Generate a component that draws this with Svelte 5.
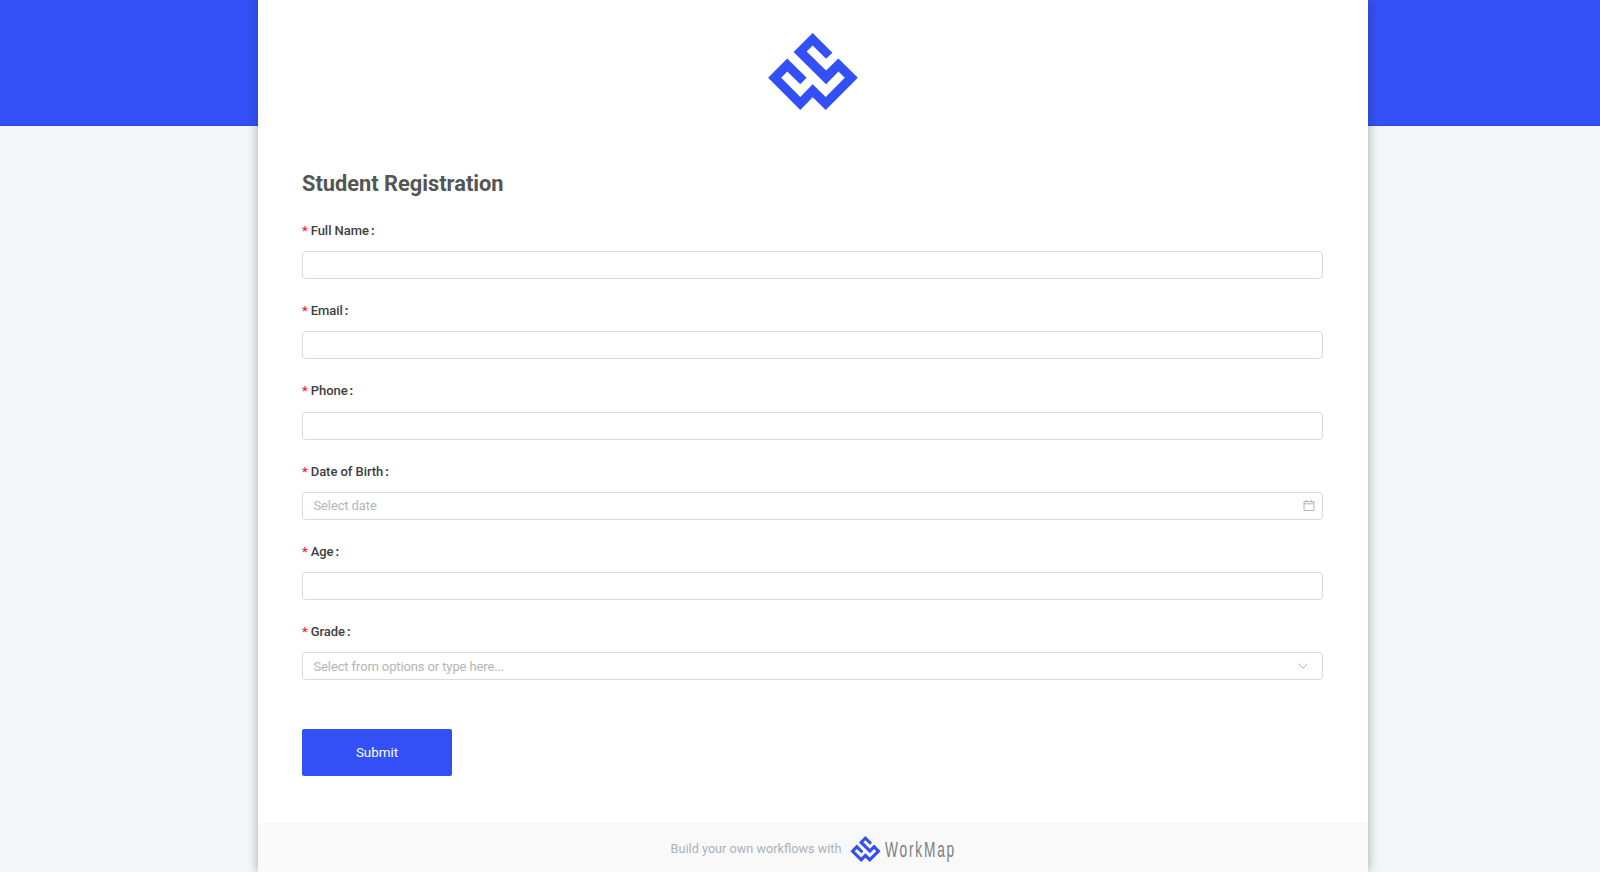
<script lang="ts">
  const fields = [
    { label: "Full Name", kind: "text" },
    { label: "Email", kind: "text" },
    { label: "Phone", kind: "text" },
    { label: "Date of Birth", kind: "date", placeholder: "Select date" },
    { label: "Age", kind: "text" },
    { label: "Grade", kind: "select", placeholder: "Select from options or type here..." },
  ];
  const logoPoints =
    "219,40 278,99 259,117 219,77 201,95 259,152 296,116 354,174 258,270 219,232 182,270 86,174 143,116 201,174 182,193 143,155 125,174 182,231 219,193 258,231 315,174 296,155 259,193 162,97";
</script>

<div class="page">
  <main class="card">
    <div class="logo-wrap">
      <svg class="logo" viewBox="86 40 268 230" aria-hidden="true">
        <polygon points={logoPoints} />
      </svg>
    </div>

    <form class="form" onsubmit={(e) => e.preventDefault()}>
      <h1>Student Registration</h1>

      {#each fields as field (field.label)}
        <div class="field">
          <label for={field.label}><span class="req">*</span>{field.label}<span class="colon">:</span></label>
          <div class="control">
            <input id={field.label} type="text" placeholder={field.placeholder ?? ""} />
            {#if field.kind === "date"}
              <svg class="icon" viewBox="0 0 12 12" aria-hidden="true">
                <path d="M1 2.5h10v9H1zM1 4.8h10M3.5 1v2.2M8.5 1v2.2" />
              </svg>
            {:else if field.kind === "select"}
              <svg class="icon chevron" viewBox="0 0 10 6" aria-hidden="true">
                <path d="M.6.6 5 5.2 9.4.6" />
              </svg>
            {/if}
          </div>
        </div>
      {/each}

      <button type="submit">Submit</button>
    </form>

    <footer>
      <span class="build">Build your own workflows with</span>
      <svg class="mini-logo" viewBox="86 40 268 230" aria-hidden="true">
        <polygon points={logoPoints} />
      </svg>
      <span class="brand">WorkMap</span>
    </footer>
  </main>
</div>

<style>
  :global(body) {
    margin: 0;
    font-family: Roboto, "Liberation Sans", sans-serif;
  }
  .page {
    height: 872px;
    overflow: hidden;
    background: linear-gradient(180deg, #3350f6 125px, #2b47e6 125px, #2b47e6 126px, #f3f7f8 126px);
  }
  .card {
    width: 1110px;
    height: 872px;
    margin-left: 257.5px;
    background: #fff;
    box-shadow: 0 0 10px rgba(40, 50, 60, 0.4);
    display: flex;
    flex-direction: column;
  }
  .logo-wrap {
    display: flex;
    justify-content: center;
    padding-top: 33px;
    height: 132px;
    box-sizing: border-box;
  }
  .logo {
    width: 90px;
    height: 77px;
    fill: #3350f6;
  }
  .form {
    flex: 1;
    padding: 0 44.5px;
  }
  h1 {
    margin: 0;
    padding-top: 36.5px;
    height: 52.8px;
    font-size: 21.8px;
    line-height: 30px;
    font-weight: 700;
    color: #555;
  }
  .field {
    display: flow-root;
    height: 80.2px;
  }
  label {
    display: block;
    height: 30.2px;
    margin-top: -0.2px;
    font-size: 13px;
    line-height: 20px;
    font-weight: 500;
    letter-spacing: -0.05px;
    color: #404040;
  }
  .req {
    color: #f5222d;
    margin-right: 3px;
  }
  .colon {
    margin-left: 2px;
    font-weight: 700;
  }
  .control {
    position: relative;
  }
  input {
    display: block;
    width: 100%;
    height: 28px;
    box-sizing: border-box;
    padding: 0 10.5px;
    border: 1px solid #dadada;
    border-radius: 4px;
    background: #fff;
    font-family: inherit;
    font-size: 13px;
    letter-spacing: -0.12px;
    outline: none;
  }
  input::placeholder {
    color: #b5b5b5;
    opacity: 1;
  }
  .icon {
    position: absolute;
    top: 7.5px;
    right: 8px;
    width: 12px;
    height: 12px;
    fill: none;
    stroke: #b4b4b4;
    stroke-width: 1;
  }
  .chevron {
    top: 11px;
    right: 15px;
    width: 10px;
    height: 6px;
  }
  button {
    display: block;
    width: 150px;
    height: 47px;
    margin-top: 27px;
    border: none;
    border-radius: 2px;
    background: #3350f6;
    color: #fff;
    font-family: inherit;
    font-size: 13.4px;
    font-weight: 400;
  }
  footer {
    height: 49px;
    box-sizing: border-box;
    padding-top: 3px;
    background: #f9f9f9;
    display: flex;
    align-items: center;
    justify-content: center;
  }
  .build {
    margin-bottom: 2px;
    font-size: 12.7px;
    color: #a9b1b9;
  }
  .mini-logo {
    width: 31px;
    height: 26px;
    margin-left: 9px;
    fill: #3350f6;
  }
  .brand {
    display: inline-block;
    width: 69px;
    margin-left: 4px;
    margin-top: 1px;
    font-family: "Liberation Sans", sans-serif;
    font-size: 22.4px;
    letter-spacing: 3px;
    color: #7d7d80;
    white-space: nowrap;
    transform: scaleX(0.61);
    transform-origin: left center;
  }
</style>
